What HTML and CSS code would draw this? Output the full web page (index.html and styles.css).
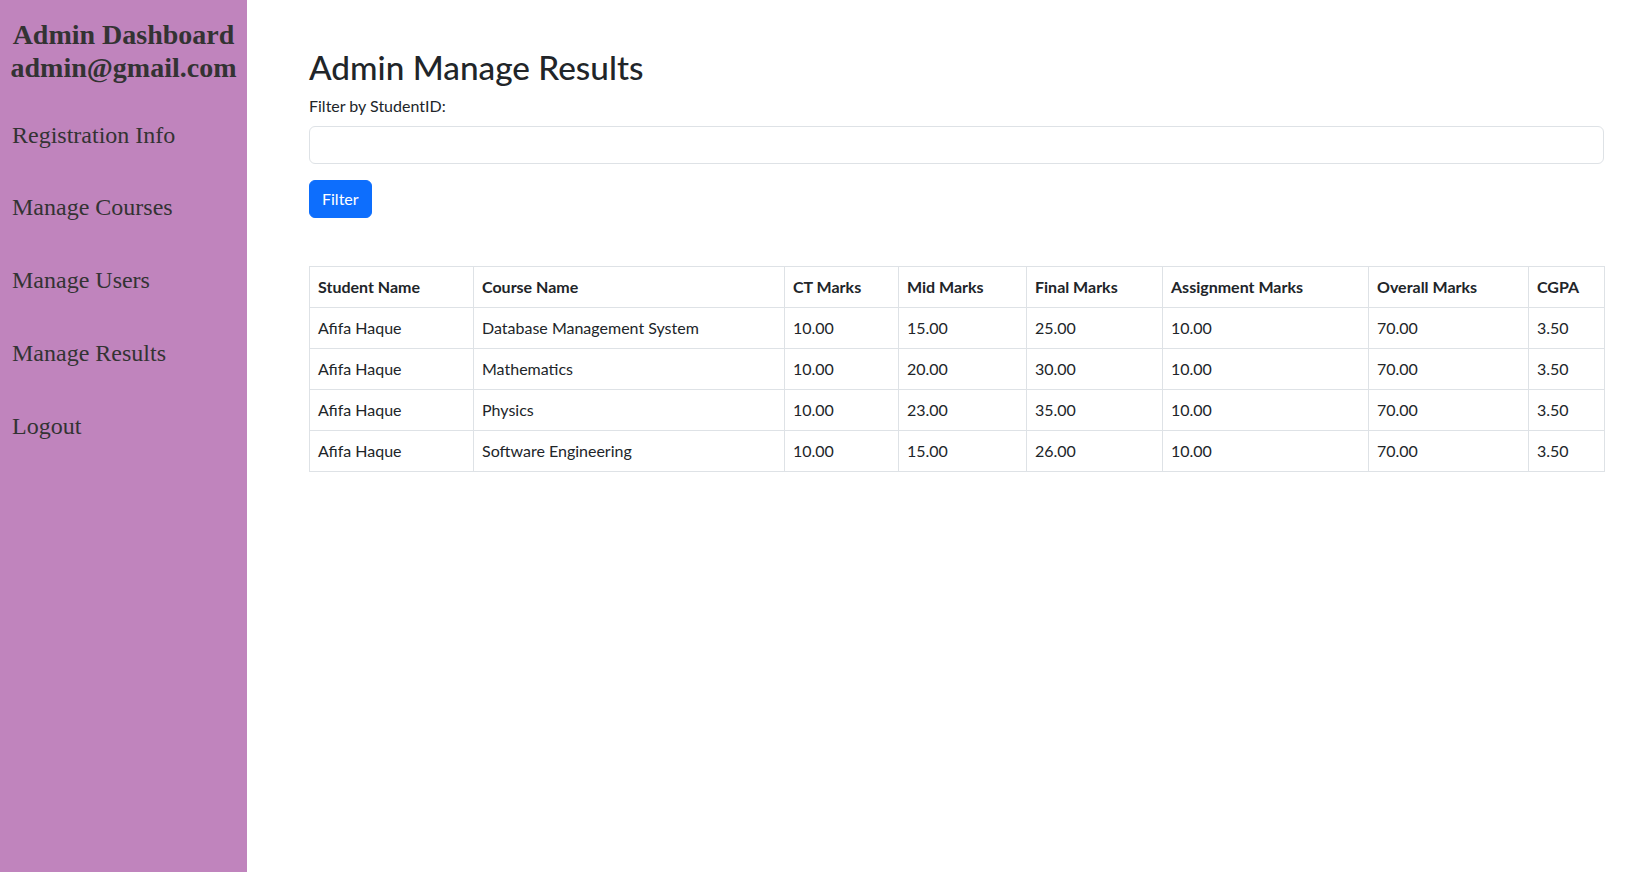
FILE: index.html
```html
<!DOCTYPE html>
<html lang="en">
<head>
<meta charset="utf-8">
<title>Admin Manage Results</title>
<link rel="stylesheet" href="styles.css">
</head>
<body>
<div class="layout">
  <aside class="sidebar">
    <h2 class="sidebar-title">Admin Dashboard admin@gmail.com</h2>
    <nav class="nav">
      <a class="nav-link" href="#">Registration Info</a>
      <a class="nav-link" href="#">Manage Courses</a>
      <a class="nav-link" href="#">Manage Users</a>
      <a class="nav-link" href="#">Manage Results</a>
      <a class="nav-link" href="#">Logout</a>
    </nav>
  </aside>
  <main class="main">
    <h1 class="page-title">Admin Manage Results</h1>
    <form class="filter-form">
      <label class="form-label" for="sid">Filter by StudentID:</label>
      <input class="form-control" id="sid" type="text">
      <button class="btn-primary" type="button">Filter</button>
    </form>
    <table class="results">
      <colgroup>
        <col class="c-student"><col class="c-course"><col class="c-ct"><col class="c-mid"><col class="c-final"><col class="c-assign"><col class="c-overall"><col class="c-cgpa">
      </colgroup>
      <thead>
        <tr><th>Student Name</th><th>Course Name</th><th>CT Marks</th><th>Mid Marks</th><th>Final Marks</th><th>Assignment Marks</th><th>Overall Marks</th><th>CGPA</th></tr>
      </thead>
      <tbody>
        <tr><td>Afifa Haque</td><td>Database Management System</td><td>10.00</td><td>15.00</td><td>25.00</td><td>10.00</td><td>70.00</td><td>3.50</td></tr>
        <tr><td>Afifa Haque</td><td>Mathematics</td><td>10.00</td><td>20.00</td><td>30.00</td><td>10.00</td><td>70.00</td><td>3.50</td></tr>
        <tr><td>Afifa Haque</td><td>Physics</td><td>10.00</td><td>23.00</td><td>35.00</td><td>10.00</td><td>70.00</td><td>3.50</td></tr>
        <tr><td>Afifa Haque</td><td>Software Engineering</td><td>10.00</td><td>15.00</td><td>26.00</td><td>10.00</td><td>70.00</td><td>3.50</td></tr>
      </tbody>
    </table>
  </main>
</div>
</body>
</html>
```
FILE: styles.css
```css
* { box-sizing: border-box; }
html, body { margin: 0; padding: 0; }
body {
  background: #fff;
  color: #212529;
  font-family: "Lato", "Noto Sans", sans-serif;
  font-size: 16px;
  line-height: 1.5;
}
.layout {
  display: flex;
  min-height: 100vh;
}
.sidebar {
  width: 247px;
  flex-shrink: 0;
  background: #c084bd;
  color: #333;
  font-family: "Liberation Serif", "Times New Roman", serif;
  padding-top: 18px;
}
.sidebar-title {
  margin: 0 auto;
  width: 236px;
  font-size: 28px;
  font-weight: bold;
  line-height: 33px;
  text-align: center;
}
.nav {
  display: flex;
  flex-direction: column;
  margin-top: 15px;
}
.nav-link {
  display: block;
  padding: 22.5px 12px;
  font-size: 24px;
  line-height: 27.9px;
  color: #333;
  text-decoration: none;
}
.main {
  flex: 1;
  min-width: 0;
  padding: 48px 27px 0 62px;
}
.page-title {
  margin: 0 0 8px;
  font-size: 33.3px;
  font-weight: 500;
  line-height: 38px;
}
.form-label {
  display: block;
  margin-bottom: 8px;
}
.form-control {
  display: block;
  width: 100%;
  height: 38px;
  margin: 0 0 16px;
  padding: 6px 12px;
  border: 1px solid #dee2e6;
  border-radius: 6px;
  font: inherit;
}
.btn-primary {
  display: block;
  height: 38px;
  padding: 6px 12px;
  border: 1px solid #0d6efd;
  border-radius: 6px;
  background: #0d6efd;
  color: #fff;
  font: inherit;
  margin-bottom: 48px;
}
.results {
  width: 100%;
  table-layout: fixed;
  border-collapse: collapse;
}
.results th, .results td {
  border: 1px solid #dee2e6;
  padding: 8px;
  text-align: left;
  line-height: 24px;
  white-space: nowrap;
}
.results th { font-weight: bold; }
.c-student { width: 164px; }
.c-course { width: 311px; }
.c-ct { width: 114px; }
.c-mid { width: 128px; }
.c-final { width: 136px; }
.c-assign { width: 206px; }
.c-overall { width: 160px; }
.c-cgpa { width: 76px; }
```
